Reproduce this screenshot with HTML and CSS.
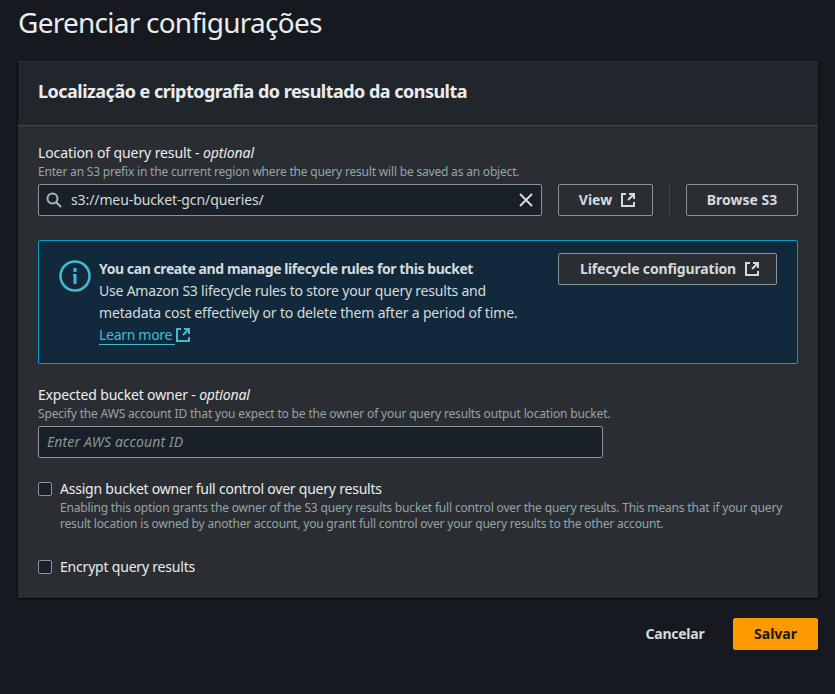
FILE: index.html
```html
<!DOCTYPE html>
<html lang="pt-BR">
<head>
<meta charset="utf-8">
<title>Gerenciar configurações</title>
<link rel="stylesheet" href="styles.css">
</head>
<body>
<svg class="sprite" width="0" height="0">
  <symbol id="external" viewBox="0 0 16 16">
    <path d="M6 2H2v12h12v-4M9 2h5v5M14 2 8 8" fill="none" stroke="currentColor" stroke-width="2"/>
  </symbol>
</svg>
<main class="page">
  <h1 class="title"><span class="t-title">Gerenciar configurações</span></h1>
  <section class="panel">
    <header class="panel-header"><h2><span class="t-head">Localização e criptografia do resultado da consulta</span></h2></header>
    <div class="panel-body">
      <div class="field">
        <div class="label"><span class="t-loc">Location of query result - <i>optional</i></span></div>
        <div class="hint"><span class="t-enter">Enter an S3 prefix in the current region where the query result will be saved as an object.</span></div>
        <div class="row">
          <div class="input search">
            <svg class="icon muted" viewBox="0 0 16 16"><circle cx="6.500" cy="6.500" r="5" fill="none" stroke="currentColor" stroke-width="2"/><path d="m10 10 5 5" stroke="currentColor" stroke-width="2"/></svg>
            <span class="value"><span class="t-value">s3://meu-bucket-gcn/queries/</span></span>
            <svg class="icon" viewBox="0 0 16 16"><path d="m2 2 12 12M14 2 2 14" stroke="currentColor" stroke-width="2"/></svg>
          </div>
          <button class="btn view"><span class="t-view">View</span><svg class="icon"><use href="#external"/></svg></button>
          <span class="divider"></span>
          <button class="btn browse"><span class="t-browse">Browse S3</span></button>
        </div>
      </div>
      <div class="alert">
        <svg class="info" viewBox="0 0 32 32"><circle cx="16" cy="16" r="14.500" fill="none" stroke="currentColor" stroke-width="2.500"/><path d="M16 8v4M16 14v10" class="info-mark"/><path d="M14 14h2v2h-2z" fill="currentColor"/></svg>
        <div class="alert-text">
          <div><b class="t-you">You can create and manage lifecycle rules for this bucket</b></div>
          <div><span class="t-use">Use Amazon S3 lifecycle rules to store your query results and</span></div>
          <div><span class="t-meta">metadata cost effectively or to delete them after a period of time.</span></div>
          <div class="link"><a><span class="t-learn">Learn more</span></a><svg class="icon"><use href="#external"/></svg></div>
        </div>
        <button class="btn lifecycle"><span class="t-life">Lifecycle configuration</span><svg class="icon"><use href="#external"/></svg></button>
      </div>
      <div class="field owner">
        <div class="label"><span class="t-owner">Expected bucket owner - <i>optional</i></span></div>
        <div class="hint"><span class="t-specify">Specify the AWS account ID that you expect to be the owner of your query results output location bucket.</span></div>
        <div class="input account"><i class="t-place">Enter AWS account ID</i></div>
      </div>
      <div class="check">
        <span class="box"></span>
        <div>
          <div class="label"><span class="t-assign">Assign bucket owner full control over query results</span></div>
          <div class="hint"><span class="t-enable">Enabling this option grants the owner of the S3 query results bucket full control over the query results. This means that if your query</span></div>
          <div class="hint"><span class="t-result">result location is owned by another account, you grant full control over your query results to the other account.</span></div>
        </div>
      </div>
      <div class="check encrypt">
        <span class="box"></span>
        <div class="label"><span class="t-encrypt">Encrypt query results</span></div>
      </div>
    </div>
  </section>
  <footer class="actions">
    <button class="btn plain"><span class="t-cancel">Cancelar</span></button>
    <button class="btn primary"><span class="t-save">Salvar</span></button>
  </footer>
</main>
</body>
</html>
```
FILE: styles.css
```css
* { box-sizing: border-box; }
body { margin: 0; height: 694px; overflow: hidden; background: #16191f; color: #d5dbdb; font: 14px/22px "Noto Sans", sans-serif; white-space: nowrap; }
.sprite { position: absolute; }
.page { padding: 4px 17px 0 18px; }
h1, h2 { margin: 0; color: #eaeded; }
h1 { font-size: 28px; line-height: 36px; font-weight: 400; }
h2 { font-size: 18px; line-height: 22px; font-weight: 700; }
.panel { margin-top: 21px; background: #2a2e33; border-top: 1px solid #2c3036; box-shadow: 0 1px 1px #0009, -1px 0 1px #0005, 1px 0 1px #0005; height: 537px; }
.panel-header { height: 64px; padding: 18px 20px; background: #21252c; border-bottom: 1px solid #414750; }
.panel-body { padding: 16px 20px; }
.label { line-height: 22px; color: #eaeded; }
.hint { font-size: 12px; line-height: 16px; color: #95a5a6; }
.row { display: flex; margin-top: 4px; }
.input { display: flex; align-items: center; height: 32px; border: 1px solid #879596; border-radius: 2px; background: #1a2029; padding: 0 8px; }
.search { width: 504px; padding: 0 7px; margin-right: 16px; color: #d5dbdb; }
.value { flex: 1; margin-left: 9px; }
.icon { width: 16px; height: 16px; flex: none; }
.muted { color: #aab7b8; }
.btn { display: flex; align-items: center; justify-content: center; height: 32px; padding: 0; background: #2a2e33; border: 1px solid #879596; border-radius: 2px; color: #d5dbdb; font: 700 14px/22px "Noto Sans", sans-serif; }
.btn .icon { margin-left: 8px; }
.view { width: 95px; padding-left: 4px; }
.divider { width: 1px; height: 32px; background: #414750; margin: 0 16px; }
.browse { width: 112px; }
.alert { display: flex; margin-top: 24px; height: 124px; padding: 12px 20px 0; border: 1px solid #00a1c9; border-radius: 2px; background: #12293b; }
.info { width: 32px; height: 32px; margin: 7px 8px 0 0; color: #44b9d6; }
.info-mark { fill: none; stroke: currentColor; stroke-width: 3; }
.alert-text { width: 459px; padding-top: 5px; }
.link { display: flex; align-items: center; color: #44b9d6; }
.link a { border-bottom: 1px solid #44b9d6; line-height: 22px; height: 21px; padding-right: 3px; }
.lifecycle { width: 219px; padding-left: 5px; }
.owner { margin-top: 20px; }
.account { width: 565px; margin-top: 4px; color: #879596; }
.check { display: flex; margin-top: 20px; }
.box { flex: none; width: 14px; height: 14px; margin: 4px 8px 0 0; border: 1px solid #879596; border-radius: 2px; background: #1a2029; }
.encrypt { margin-top: 24px; }
.actions { display: flex; justify-content: flex-end; margin-top: 20px; }
.plain { border-color: transparent; background: none; width: 102px; margin-right: 7px; }
.primary { width: 85px; background: #ff9900; border-color: #ff9900; color: #16191f; }

.t-title { letter-spacing: -.75px; }
.t-head { letter-spacing: -.52px; }
.t-loc { letter-spacing: -.1px; }
.t-enter { letter-spacing: -.19px; }
.t-value { letter-spacing: -.1px; }
.t-you { letter-spacing: -.42px; }
.t-use { letter-spacing: -.21px; }
.t-meta { letter-spacing: -.16px; }
.t-learn { letter-spacing: -.3px; }
.t-life { letter-spacing: -.15px; }
.t-owner { letter-spacing: -.16px; }
.t-specify { letter-spacing: -.165px; }
.t-place { letter-spacing: .14px; }
.t-assign { letter-spacing: -.22px; }
.t-enable { letter-spacing: -.165px; }
.t-result { letter-spacing: -.19px; }
.t-encrypt { letter-spacing: -.2px; }
.t-cancel { letter-spacing: -.25px; }
```
